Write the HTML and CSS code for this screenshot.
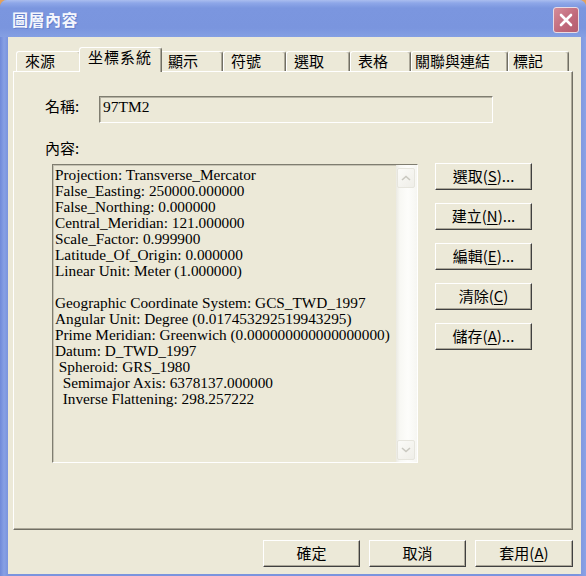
FILE: index.html
```html
<!DOCTYPE html>
<html lang="zh-Hant">
<head>
<meta charset="utf-8">
<title>圖層內容</title>
<link rel="stylesheet" href="styles.css">
</head>
<body>
<div class="window">
  <div class="titlebar">
    <span class="title">圖層內容</span>
    <div class="close">
      <svg width="16" height="16" viewBox="0 0 16 16"><path d="M3 3 L13 13 M13 3 L3 13" stroke="#fff" stroke-width="2.6" stroke-linecap="round" fill="none"/></svg>
    </div>
  </div>
  <div class="client">
    <div class="tabs">
      <div class="tab t-source">來源</div>
      <div class="tab active t-coord">坐標系統</div>
      <div class="tab t-display">顯示</div>
      <div class="tab t-symbol">符號</div>
      <div class="tab t-select">選取</div>
      <div class="tab t-table">表格</div>
      <div class="tab t-join">關聯與連結</div>
      <div class="tab t-label">標記</div>
    </div>
    <div class="panel">
      <div class="name-row">
        <span class="label name-label">名稱:</span>
        <div class="textbox">97TM2</div>
      </div>
      <div class="label content-label">內容:</div>
      <div class="content-row">
        <div class="textarea">
          <div class="text">Projection: Transverse_Mercator
False_Easting: 250000.000000
False_Northing: 0.000000
Central_Meridian: 121.000000
Scale_Factor: 0.999900
Latitude_Of_Origin: 0.000000
Linear Unit: Meter (1.000000)

Geographic Coordinate System: GCS_TWD_1997
Angular Unit: Degree (0.017453292519943295)
Prime Meridian: Greenwich (0.000000000000000000)
Datum: D_TWD_1997
 Spheroid: GRS_1980
  Semimajor Axis: 6378137.000000
  Inverse Flattening: 298.257222</div>
          <div class="scrollbar">
            <div class="arrow"><svg width="10" height="6" viewBox="0 0 10 6"><path d="M1 5 L5 1.5 L9 5" stroke="#c9c8c0" stroke-width="1.6" fill="none"/></svg></div>
            <div class="track"></div>
            <div class="arrow"><svg width="10" height="6" viewBox="0 0 10 6"><path d="M1 1 L5 4.5 L9 1" stroke="#c9c8c0" stroke-width="1.6" fill="none"/></svg></div>
          </div>
        </div>
        <div class="side-buttons">
          <div class="btn">選取(<u>S</u>)...</div>
          <div class="btn">建立(<u>N</u>)...</div>
          <div class="btn">編輯(<u>E</u>)...</div>
          <div class="btn">清除(<u>C</u>)</div>
          <div class="btn">儲存(<u>A</u>)...</div>
        </div>
      </div>
    </div>
    <div class="footer">
      <div class="btn">確定</div>
      <div class="btn">取消</div>
      <div class="btn wide">套用(<u>A</u>)</div>
    </div>
  </div>
</div>
</body>
</html>
```
FILE: styles.css
```css
html, body {
  margin: 0;
  padding: 0;
}
body {
  width: 586px;
  height: 576px;
  overflow: hidden;
  background: #e3a15c;
  font-family: "Noto Sans CJK TC", "Noto Sans", sans-serif;
  color: #000;
}
.window {
  width: 586px;
  height: 576px;
  display: flex;
  flex-direction: column;
  border-radius: 7px 7px 0 0;
  overflow: hidden;
  background: linear-gradient(to right, #6f89d8 0, #87a0e4 4px, #7a94de 8px, #7a94de 578px, #8aa2e6 586px);
}
.titlebar {
  height: 37px;
  flex: none;
  display: flex;
  align-items: flex-start;
  padding-left: 12px;
  padding-right: 7px;
  box-sizing: border-box;
  background: linear-gradient(#aabdef 0, #8ea7e8 3px, #7b96df 8px, #7a95de 28px, #849fe3 37px);
}
.title {
  flex: 1;
  color: #f4f6fd;
  font-weight: bold;
  font-size: 16px;
  line-height: 20px;
  margin-top: 9px;
  letter-spacing: 0.5px;
  text-shadow: 1px 1px 0 #6580cc;
}
.close {
  width: 26px;
  height: 26px;
  margin-top: 7px;
  box-sizing: border-box;
  border: 1px solid #eadbe2;
  border-radius: 3px;
  background: linear-gradient(135deg, #d58c98 0%, #c0687a 60%, #b45e70 100%);
  display: flex;
  align-items: center;
  justify-content: center;
}
.client {
  flex: 1;
  background: #ece9d8;
  margin: 0 5px 2px 8px;
  padding: 10px 8px 7px 5px;
  display: flex;
  flex-direction: column;
  box-sizing: border-box;
}
.tabs {
  display: flex;
  align-items: flex-end;
  height: 24px;
  padding-left: 3px;
  flex: none;
  position: relative;
  z-index: 1;
}
.tab {
  height: 20px;
  box-sizing: border-box;
  background: #ece9d8;
  border-top: 1px solid #fff;
  border-left: 1px solid #fff;
  border-right: 1px solid #716f64;
  box-shadow: inset -1px 0 0 #aca899;
  border-radius: 3px 3px 0 0;
  font-size: 15px;
  line-height: 18px;
  white-space: nowrap;
  padding-left: 7px;
}
.tab.active {
  height: 25px;
  margin: 0 -2px -1px;
  position: relative;
  z-index: 2;
  letter-spacing: 1px;
}
.t-source { width: 65px; padding-left: 8px; }
.t-coord { width: 83px; padding-left: 8px; }
.t-display { width: 63px; }
.t-symbol { width: 63px; }
.t-select { width: 64px; }
.t-table { width: 61px; }
.t-join { width: 97px; padding-left: 3px; }
.t-label { width: 61px; padding-left: 4px; }
.panel {
  width: 560px;
  height: 459px;
  flex: none;
  box-sizing: border-box;
  border-top: 1px solid #fff;
  border-left: 1px solid #fff;
  border-right: 1px solid #716f64;
  border-bottom: 1px solid #716f64;
  box-shadow: inset -1px -1px 0 #aca899;
  padding-left: 31px;
  display: flex;
  flex-direction: column;
}
.label {
  font-size: 15px;
  line-height: 18px;
}
.name-row {
  margin-top: 24px;
  display: flex;
  align-items: flex-start;
}
.name-label {
  width: 54px;
  margin-top: 1px;
}
.textbox {
  width: 394px;
  height: 27px;
  box-sizing: border-box;
  border: 1px solid;
  border-color: #7f7d70 #fff #fff #7f7d70;
  box-shadow: inset 1px 1px 0 #b5b2a3;
  padding-left: 3px;
  font-family: "Liberation Serif", serif;
  font-size: 15.5px;
  line-height: 20px;
}
.content-label {
  margin-top: 16px;
}
.content-row {
  margin-top: 7px;
  margin-left: 7px;
  display: flex;
  align-items: flex-start;
}
.textarea {
  width: 366px;
  height: 299px;
  box-sizing: border-box;
  border: 1px solid;
  border-color: #7f7d70 #fff #fff #7f7d70;
  box-shadow: inset 1px 1px 0 #c6c3b4;
  display: flex;
}
.text {
  flex: 1;
  overflow: hidden;
  padding: 2px 0 0 2px;
  font-family: "Liberation Serif", serif;
  font-size: 15.3px;
  line-height: 16px;
  white-space: pre;
}
.scrollbar {
  width: 21px;
  flex: none;
  box-sizing: border-box;
  padding: 3px 2px 2px 1px;
  display: flex;
  flex-direction: column;
  background: linear-gradient(to right, #ebeae3 0, #f8f8f4 4px, #fdfdfb 12px, #f6f6f2 21px);
}
.arrow {
  height: 20px;
  flex: none;
  box-sizing: border-box;
  border: 1px solid #e6e5dd;
  border-radius: 2px;
  background: linear-gradient(135deg, #fbfbf8, #efeee8);
  display: flex;
  align-items: center;
  justify-content: center;
}
.track {
  flex: 1;
}
.side-buttons {
  margin-left: 17px;
  margin-top: -1px;
  display: flex;
  flex-direction: column;
  gap: 13px;
}
.btn {
  width: 97px;
  height: 27px;
  box-sizing: border-box;
  background: #ece9d8;
  border: 1px solid;
  border-color: #fff #404040 #404040 #fff;
  box-shadow: inset -1px -1px 0 #aca899;
  font-size: 15px;
  line-height: 24px;
  text-align: center;
  white-space: nowrap;
}
.btn u {
  text-decoration-thickness: 1px;
  text-underline-offset: 2px;
}
.footer {
  margin-top: 10px;
  display: flex;
  justify-content: flex-end;
  gap: 9px;
}
.btn.wide {
  width: 98px;
}
```
